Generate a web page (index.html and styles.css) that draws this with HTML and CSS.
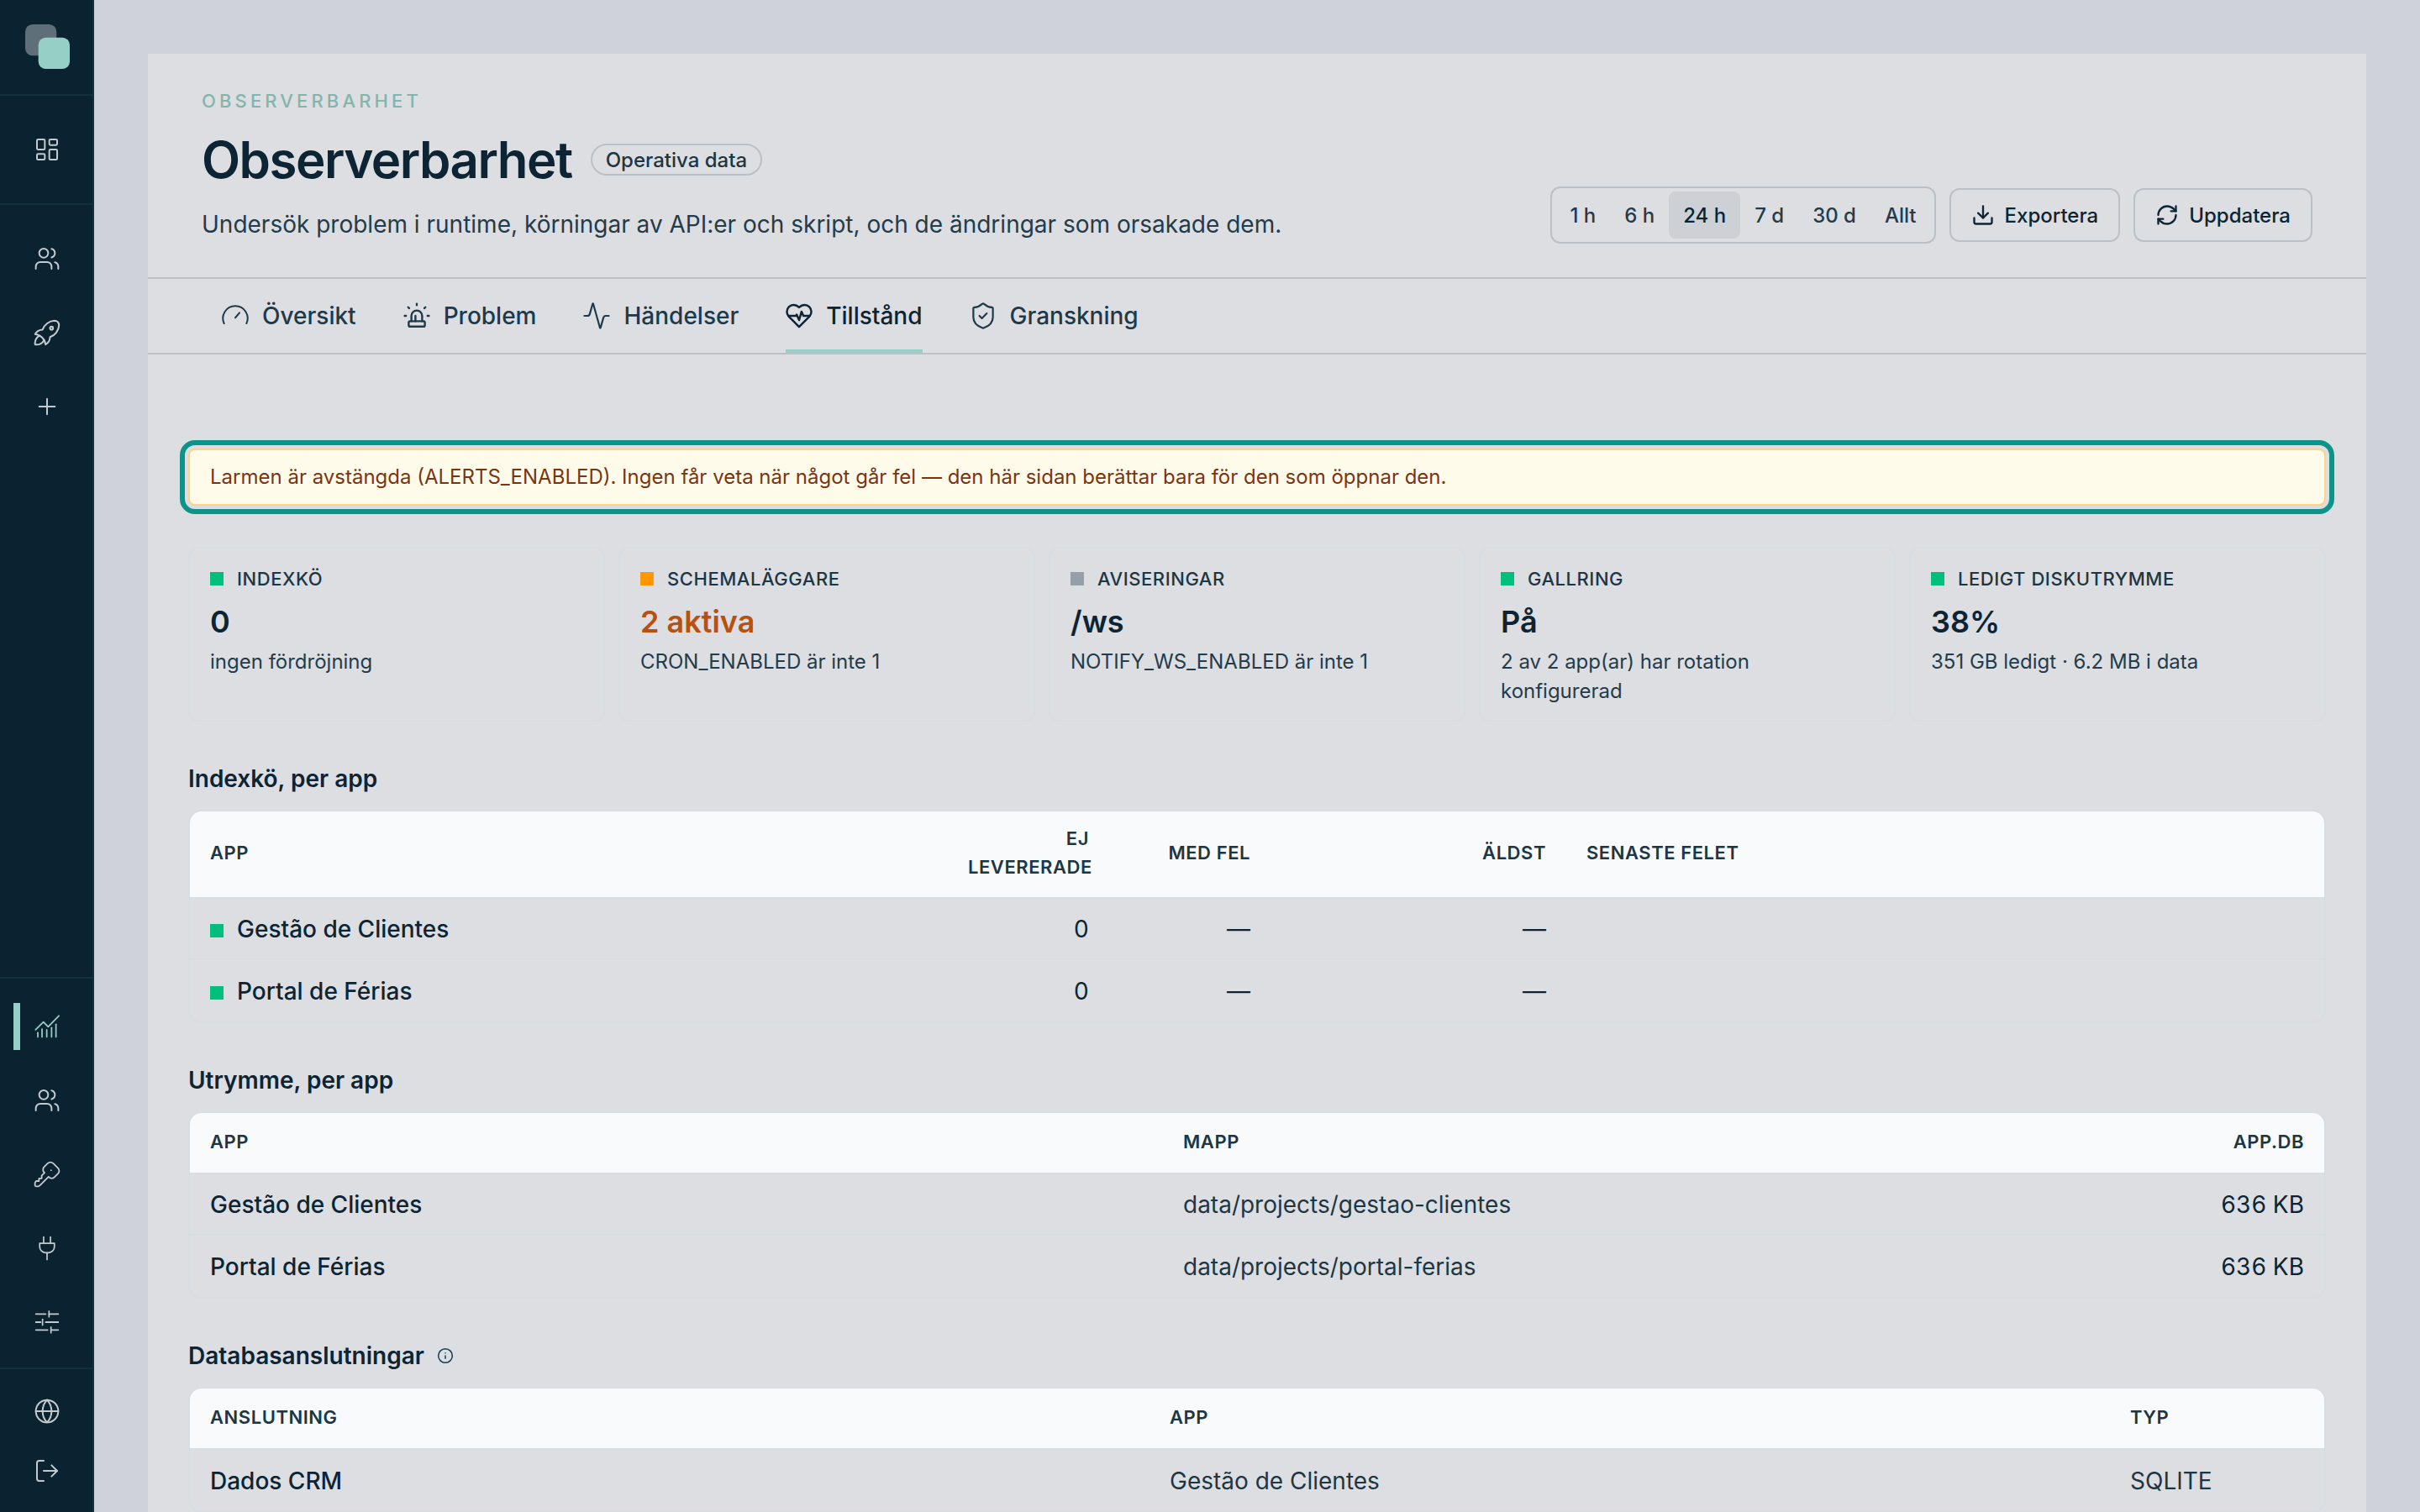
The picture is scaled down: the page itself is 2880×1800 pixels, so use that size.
FILE: index.html
```html
<!DOCTYPE html>
<html lang="sv">
<head>
  <meta charset="UTF-8">
  <title>Observerbarhet</title>
  <link rel="stylesheet" href="styles.css">
</head>
<body>

<aside class="sidebar">
  <div class="side-logo">
    <svg width="53" height="53" viewBox="0 0 54 54">
      <rect x="0" y="0" width="38" height="38" rx="9" fill="#5f6f7a"/>
      <rect x="16" y="16" width="38" height="38" rx="9" fill="#96cfc6"/>
    </svg>
  </div>
  <div class="side-group side-home">
    <a class="side-item">
      <svg class="side-icon" viewBox="0 0 24 24"><rect x="3" y="3" width="7" height="9" rx="1"/><rect x="14" y="3" width="7" height="5" rx="1"/><rect x="14" y="12" width="7" height="9" rx="1"/><rect x="3" y="16" width="7" height="5" rx="1"/></svg>
    </a>
  </div>
  <div class="side-group side-main">
    <a class="side-item">
      <svg class="side-icon" viewBox="0 0 24 24"><path d="M16 21v-2a4 4 0 0 0-4-4H6a4 4 0 0 0-4 4v2"/><circle cx="9" cy="7" r="4"/><path d="M22 21v-2a4 4 0 0 0-3-3.87"/><path d="M16 3.13a4 4 0 0 1 0 7.75"/></svg>
    </a>
    <a class="side-item">
      <svg class="side-icon fit" viewBox="3 3 18 18"><path d="M4 13a8 8 0 0 1 7 7a6 6 0 0 0 3 -5a9 9 0 0 0 6 -8a3 3 0 0 0 -3 -3a9 9 0 0 0 -8 6a6 6 0 0 0 -5 3"/><path d="M7 14a6 6 0 0 0 -3 6a6 6 0 0 0 6 -3"/><circle cx="15" cy="9" r="1"/></svg>
    </a>
    <a class="side-item">
      <svg class="side-icon" viewBox="0 0 24 24"><path d="M12 5v14"/><path d="M5 12h14"/></svg>
    </a>
  </div>
  <div class="side-spacer"></div>
  <div class="side-group side-admin">
    <a class="side-item active">
      <svg class="side-icon" viewBox="-1.7 -1.7 27.4 27.4"><path d="M.3 15.4l8 -8l4.8 4.9l10.9 -11.2"/><path d="M2.6 22.6v-4.3"/><path d="M6.9 22.6v-8"/><path d="M11.7 22.6v-7.2"/><path d="M16.6 22.6v-9.5"/><path d="M21.1 22.6v-12.9"/></svg>
    </a>
    <a class="side-item">
      <svg class="side-icon" viewBox="0 0 24 24"><path d="M16 21v-2a4 4 0 0 0-4-4H6a4 4 0 0 0-4 4v2"/><circle cx="9" cy="7" r="4"/><path d="M22 21v-2a4 4 0 0 0-3-3.87"/><path d="M16 3.13a4 4 0 0 1 0 7.75"/></svg>
    </a>
    <a class="side-item">
      <svg class="side-icon fit" viewBox="2 2 20 20"><path d="M16.555 3.843l3.602 3.602a2.877 2.877 0 0 1 0 4.069l-2.643 2.643a2.877 2.877 0 0 1 -4.069 0l-.301 -.301l-6.558 6.558a2 2 0 0 1 -1.239 .578l-.175 .008h-1.172a1 1 0 0 1 -.993 -.883l-.007 -.117v-1.172a2 2 0 0 1 .467 -1.284l.119 -.13l.414 -.414h2v-2h2v-2l2.144 -2.144l-.301 -.301a2.877 2.877 0 0 1 0 -4.069l2.643 -2.643a2.877 2.877 0 0 1 4.069 0z"/><path d="M15 9h.01"/></svg>
    </a>
    <a class="side-item">
      <svg class="side-icon" viewBox="-1.7 -1.7 27.4 27.4"><path d="M8.5 .5v6.5"/><path d="M15.5 .5v6.5"/><path d="M4.5 7h15v3.5a6 6 0 0 1 -6 6h-3a6 6 0 0 1 -6 -6z"/><path d="M12 16.5v7"/></svg>
    </a>
    <a class="side-item">
      <svg class="side-icon" viewBox="-1.7 -1.7 27.4 27.4"><path d="M.6 3.7h10"/><path d="M14 3.7h9.4"/><path d="M14 .8v5.8"/><path d="M.6 12h4.8"/><path d="M10.6 12h12.8"/><path d="M7.4 9.1v5.8"/><path d="M.6 20h12"/><path d="M16 20h7.4"/><path d="M16 17.1v5.8"/></svg>
    </a>
  </div>
  <div class="side-group side-foot">
    <a class="side-item short">
      <svg class="side-icon" viewBox="0 0 24 24"><circle cx="12" cy="12" r="10"/><path d="M12 2a14.5 14.5 0 0 0 0 20 14.5 14.5 0 0 0 0-20"/><path d="M2 12h20"/></svg>
    </a>
    <a class="side-item short">
      <svg class="side-icon" viewBox="0 0 24 24"><path d="M9 21H5a2 2 0 0 1-2-2V5a2 2 0 0 1 2-2h4"/><path d="m16 17 5-5-5-5"/><path d="M21 12H9"/></svg>
    </a>
  </div>
</aside>

<main class="main">
  <section class="panel">
    <header class="panel-head">
      <div>
        <div class="eyebrow">OBSERVERBARHET</div>
        <div class="title-row">
          <h1>Observerbarhet</h1>
          <span class="chip">Operativa data</span>
        </div>
        <p class="subtitle">Undersök problem i runtime, körningar av API:er och skript, och de ändringar som orsakade dem.</p>
      </div>
      <div class="head-actions">
        <div class="segment">
          <button>1 h</button>
          <button>6 h</button>
          <button class="on">24 h</button>
          <button>7 d</button>
          <button>30 d</button>
          <button>Allt</button>
        </div>
        <button class="btn">
          <svg class="btn-icon" viewBox="0 0 24 24"><path d="M12 15V3"/><path d="M21 15v4a2 2 0 0 1-2 2H5a2 2 0 0 1-2-2v-4"/><path d="m7 10 5 5 5-5"/></svg>
          Exportera
        </button>
        <button class="btn">
          <svg class="btn-icon" viewBox="0 0 24 24"><path d="M3 12a9 9 0 0 1 9-9 9.75 9.75 0 0 1 6.74 2.74L21 8"/><path d="M21 3v5h-5"/><path d="M21 12a9 9 0 0 1-9 9 9.75 9.75 0 0 1-6.74-2.74L3 16"/><path d="M8 16H3v5"/></svg>
          Uppdatera
        </button>
      </div>
    </header>

    <nav class="tabs">
      <a class="tab">
        <svg class="tab-icon" viewBox="0 0 24 24"><path d="M2 18.75A11 11 0 1 1 22 18.75"/><path d="M12 13.7l3.75 -4.45"/></svg>
        Översikt
      </a>
      <a class="tab">
        <svg class="tab-icon" viewBox="2 2 20 20"><path d="M8 16v-4a4 4 0 0 1 8 0v4"/><path d="M3 12h1m8 -9v1m8 8h1m-15.4 -6.4l.7 .7m12.1 -.7l-.7 .7"/><rect x="6" y="16" width="12" height="4" rx="1"/><path d="M11 16v-4"/></svg>
        Problem
      </a>
      <a class="tab">
        <svg class="tab-icon" viewBox="1 1 22 22"><path d="M22 12h-2.48a2 2 0 0 0-1.93 1.46l-2.35 8.36a.25.25 0 0 1-.48 0L9.24 2.18a.25.25 0 0 0-.48 0l-2.35 8.36A2 2 0 0 1 4.49 12H2"/></svg>
        Händelser
      </a>
      <a class="tab active">
        <svg class="tab-icon" viewBox="1 1 22 22"><path d="M19 14c1.49-1.46 3-3.21 3-5.5A5.5 5.5 0 0 0 16.5 3c-1.76 0-3 .5-4.5 2-1.5-1.5-2.74-2-4.5-2A5.5 5.5 0 0 0 2 8.5c0 2.3 1.5 4.05 3 5.5l7 7Z"/><path d="M3.22 12H9.5l.5-1 2 4.5 2-7 1.5 3.5h5.27"/></svg>
        Tillstånd
      </a>
      <a class="tab">
        <svg class="tab-icon" viewBox="1 1 22 22"><path d="M20 13c0 5-3.5 7.5-7.66 8.95a1 1 0 0 1-.67-.01C7.5 20.5 4 18 4 13V6a1 1 0 0 1 1-1c2 0 4.5-1.2 6.24-2.72a1.17 1.17 0 0 1 1.52 0C14.51 3.81 17 5 19 5a1 1 0 0 1 1 1z"/><path d="m9 12 2 2 4-4"/></svg>
        Granskning
      </a>
    </nav>

    <div class="content">
      <div class="alert">Larmen är avstängda (ALERTS_ENABLED). Ingen får veta när något går fel — den här sidan berättar bara för den som öppnar den.</div>

      <div class="cards">
        <div class="card">
          <div class="card-label"><span class="dot green"></span>INDEXKÖ</div>
          <div class="card-value">0</div>
          <div class="card-sub">ingen fördröjning</div>
        </div>
        <div class="card">
          <div class="card-label"><span class="dot orange"></span>SCHEMALÄGGARE</div>
          <div class="card-value warn">2 aktiva</div>
          <div class="card-sub">CRON_ENABLED är inte 1</div>
        </div>
        <div class="card">
          <div class="card-label"><span class="dot grey"></span>AVISERINGAR</div>
          <div class="card-value">/ws</div>
          <div class="card-sub">NOTIFY_WS_ENABLED är inte 1</div>
        </div>
        <div class="card">
          <div class="card-label"><span class="dot green"></span>GALLRING</div>
          <div class="card-value">På</div>
          <div class="card-sub">2 av 2 app(ar) har rotation konfigurerad</div>
        </div>
        <div class="card">
          <div class="card-label"><span class="dot green"></span>LEDIGT DISKUTRYMME</div>
          <div class="card-value">38%</div>
          <div class="card-sub">351 GB ledigt · 6.2 MB i data</div>
        </div>
      </div>

      <h2 class="section-title">Indexkö, per app</h2>
      <div class="table-wrap">
        <table class="queue">
          <thead>
            <tr>
              <th class="q1">APP</th>
              <th class="q2 num">EJ LEVERERADE</th>
              <th class="q3 num">MED FEL</th>
              <th class="q4 num">ÄLDST</th>
              <th>SENASTE FELET</th>
            </tr>
          </thead>
          <tbody>
            <tr>
              <td><span class="dot green"></span>Gestão de Clientes</td>
              <td class="num">0</td>
              <td class="num">—</td>
              <td class="num">—</td>
              <td></td>
            </tr>
            <tr>
              <td><span class="dot green"></span>Portal de Férias</td>
              <td class="num">0</td>
              <td class="num">—</td>
              <td class="num">—</td>
              <td></td>
            </tr>
          </tbody>
        </table>
      </div>

      <h2 class="section-title">Utrymme, per app</h2>
      <div class="table-wrap">
        <table class="space">
          <thead>
            <tr>
              <th class="s1">APP</th>
              <th>MAPP</th>
              <th class="s3 num">APP.DB</th>
            </tr>
          </thead>
          <tbody>
            <tr>
              <td>Gestão de Clientes</td>
              <td class="plain">data/projects/gestao-clientes</td>
              <td class="num">636 KB</td>
            </tr>
            <tr>
              <td>Portal de Férias</td>
              <td class="plain">data/projects/portal-ferias</td>
              <td class="num">636 KB</td>
            </tr>
          </tbody>
        </table>
      </div>

      <h2 class="section-title">Databasanslutningar
        <span class="info">
          <svg viewBox="0 0 24 24"><circle cx="12" cy="12" r="10"/><path d="M12 16v-4"/><path d="M12 8h.01"/></svg>
        </span>
      </h2>
      <div class="table-wrap">
        <table class="conn">
          <thead>
            <tr>
              <th class="c1">ANSLUTNING</th>
              <th>APP</th>
              <th class="c3">TYP</th>
            </tr>
          </thead>
          <tbody>
            <tr>
              <td>Dados CRM</td>
              <td class="plain">Gestão de Clientes</td>
              <td class="plain">SQLITE</td>
            </tr>
          </tbody>
        </table>
      </div>
    </div>
  </section>
</main>

</body>
</html>
```

FILE: styles.css
```css
* {
  box-sizing: border-box;
}
html, body {
  height: 100%;
}
body {
  margin: 0;
  display: flex;
  height: 100vh;
  overflow: hidden;
  background: #cfd2da;
  color: #0c2433;
  font-family: Inter, "Liberation Sans", sans-serif;
}

/* sidebar */
.sidebar {
  width: 112px;
  flex: none;
  height: 100%;
  display: flex;
  flex-direction: column;
  background: #0b2230;
  border-right: 2px solid #12303f;
}
.side-logo {
  height: 114px;
  padding: 29px 0 0 30px;
  border-bottom: 2px solid #12303f;
}
.side-logo svg {
  display: block;
}
.side-group {
  border-bottom: 2px solid #12303f;
}
.side-home {
  height: 130px;
  padding-top: 20px;
}
.side-main {
  border-bottom: none;
  padding-top: 20px;
}
.side-spacer {
  flex: 1;
  border-bottom: 2px solid #12303f;
}
.side-admin {
  padding-top: 13px;
  height: 465px;
}
.side-foot {
  border-bottom: none;
  height: 170px;
  padding-top: 14px;
}
.side-item {
  position: relative;
  display: flex;
  align-items: center;
  justify-content: center;
  height: 88px;
  padding-left: 2px;
  color: #c3cacf;
}
.side-item.short {
  height: 71px;
}
.side-item.active {
  color: #96cfc6;
}
.side-item.active::before {
  content: "";
  position: absolute;
  left: 16px;
  top: 16px;
  width: 8px;
  height: 56px;
  background: #96cfc6;
}
.side-icon {
  width: 32px;
  height: 32px;
  fill: none;
  stroke: currentColor;
  stroke-width: 1.5;
  stroke-linecap: round;
  stroke-linejoin: round;
}
.side-icon.fit {
  stroke-width: 1.15;
}

/* panel */
.main {
  flex: 1;
  min-width: 0;
  padding: 64px 64px 0;
}
.panel {
  height: 100%;
  overflow: hidden;
  background: #dcdee2;
}
.panel-head {
  display: flex;
  justify-content: space-between;
  align-items: flex-end;
  padding: 41px 64px 40px;
  border-bottom: 2px solid #b9c0c7;
}
.eyebrow {
  font-size: 22px;
  line-height: 30px;
  font-weight: 500;
  letter-spacing: 0.188em;
  color: #84b5ad;
}
.title-row {
  display: flex;
  align-items: center;
  gap: 22px;
  margin-top: 19px;
}
h1 {
  margin: 0;
  font-size: 60px;
  line-height: 72px;
  font-weight: 600;
  letter-spacing: -0.025em;
  color: #0c2433;
}
.chip {
  height: 38px;
  padding: 0 16px;
  display: flex;
  align-items: center;
  border: 2px solid #b9c0c7;
  border-radius: 19px;
  font-size: 24px;
  font-weight: 500;
  color: #1d3644;
}
.subtitle {
  margin: 18px 0 0;
  font-size: 28px;
  line-height: 46px;
  color: #243b4a;
}
.head-actions {
  display: flex;
  align-items: center;
  gap: 16px;
}
.segment {
  display: flex;
  height: 68px;
  padding: 4px;
  border: 2px solid #b9c0c7;
  border-radius: 12px;
}
.segment button {
  height: 56px;
  padding: 0 17px;
  border: none;
  border-radius: 8px;
  background: none;
  font: 500 24px Inter, sans-serif;
  color: #243b4a;
}
.segment button.on {
  background: #cdd1d6;
  color: #0c2433;
}
.btn {
  display: flex;
  align-items: center;
  gap: 12px;
  height: 64px;
  padding: 0 24px;
  border: 2px solid #b9c0c7;
  border-radius: 12px;
  background: none;
  font: 500 24px Inter, sans-serif;
  color: #0c2433;
}
.btn-icon {
  width: 28px;
  height: 28px;
  fill: none;
  stroke: currentColor;
  stroke-width: 2;
  stroke-linecap: round;
  stroke-linejoin: round;
}

/* tabs */
.tabs {
  display: flex;
  gap: 56px;
  height: 90px;
  padding-left: 88px;
  border-bottom: 2px solid #b9c0c7;
}
.tab {
  display: flex;
  align-items: center;
  gap: 16px;
  height: 88px;
  font-size: 28px;
  font-weight: 500;
  color: #1d3a4a;
}
.tab.active {
  color: #0c2433;
  box-shadow: inset 0 -4px 0 #96cfc6;
}
.tab-icon {
  width: 32px;
  height: 32px;
  fill: none;
  stroke: currentColor;
  stroke-width: 1.5;
  stroke-linecap: round;
  stroke-linejoin: round;
}
.tab.active .tab-icon {
  stroke-width: 1.7;
}

/* content */
.content {
  padding: 112px 48px 0;
}
.alert {
  padding: 14px 24px;
  border: 2px solid #fcd38d;
  border-radius: 8px;
  outline: 6px solid #0d9488;
  outline-offset: 4px;
  background: #fffbeb;
  font-size: 24px;
  line-height: 36px;
  color: #7b3410;
}
.cards {
  display: grid;
  grid-template-columns: repeat(5, 1fr);
  gap: 16px;
  margin-top: 49px;
}
.card {
  height: 208px;
  padding: 21px 24px 0;
  border: 2px solid #d6dde3;
  border-radius: 12px;
}
.card-label {
  display: flex;
  align-items: center;
  font-size: 22px;
  line-height: 30px;
  font-weight: 500;
  letter-spacing: 0.025em;
  color: #1d3644;
}
.dot {
  display: inline-block;
  flex: none;
  width: 16px;
  height: 16px;
  margin-right: 16px;
}
.dot.green {
  background: #00bf7d;
}
.dot.orange {
  background: #ff9800;
}
.dot.grey {
  background: #93a0a9;
}
.card-value {
  margin-top: 10px;
  font-size: 36px;
  line-height: 52px;
  font-weight: 600;
  color: #0c2433;
}
.card-value.warn {
  color: #b8500f;
}
.card-sub {
  margin-top: 4px;
  font-size: 24px;
  line-height: 35px;
  color: #243b4a;
}
.section-title {
  display: flex;
  align-items: center;
  margin: 48px 0 17px;
  font-size: 28px;
  line-height: 40px;
  font-weight: 600;
  color: #0c2433;
}
.info {
  display: flex;
  align-items: center;
  justify-content: center;
  width: 27px;
  height: 27px;
  margin-left: 12px;
  background: #d9dfe4;
}
.info svg {
  width: 20px;
  height: 20px;
  fill: none;
  stroke: #1d3a4a;
  stroke-width: 1.8;
  stroke-linecap: round;
}
.table-wrap {
  border: 2px solid #d6dde3;
  border-radius: 16px;
  overflow: hidden;
}
table {
  width: 100%;
  table-layout: fixed;
  border-collapse: separate;
  border-spacing: 0;
}
th {
  height: 73px;
  padding: 0 24px 4px;
  text-align: left;
  font-size: 22px;
  line-height: 34px;
  font-weight: 600;
  letter-spacing: 0.025em;
  color: #1d3644;
  background: #f8fafc;
  border-bottom: 2px solid #d6dde3;
}
td {
  height: 73px;
  padding: 0 24px;
  font-size: 28px;
  font-weight: 500;
  color: #0c2433;
  border-bottom: 2px solid #d6dde3;
}
td.plain {
  font-weight: 400;
  color: #1d3644;
}
td.num {
  font-weight: 400;
  font-variant-numeric: tabular-nums;
}
tr:last-child td {
  border-bottom: none;
}
.num {
  text-align: right;
}
.queue th {
  height: 104px;
}
.q1 {
  width: 902px;
}
.q2 {
  width: 192px;
}
.q3 {
  width: 192px;
}
.q4 {
  width: 352px;
}
.s1 {
  width: 1158px;
}
.s3 {
  width: 300px;
}
.c1 {
  width: 1142px;
}
.c3 {
  width: 255px;
}
```
